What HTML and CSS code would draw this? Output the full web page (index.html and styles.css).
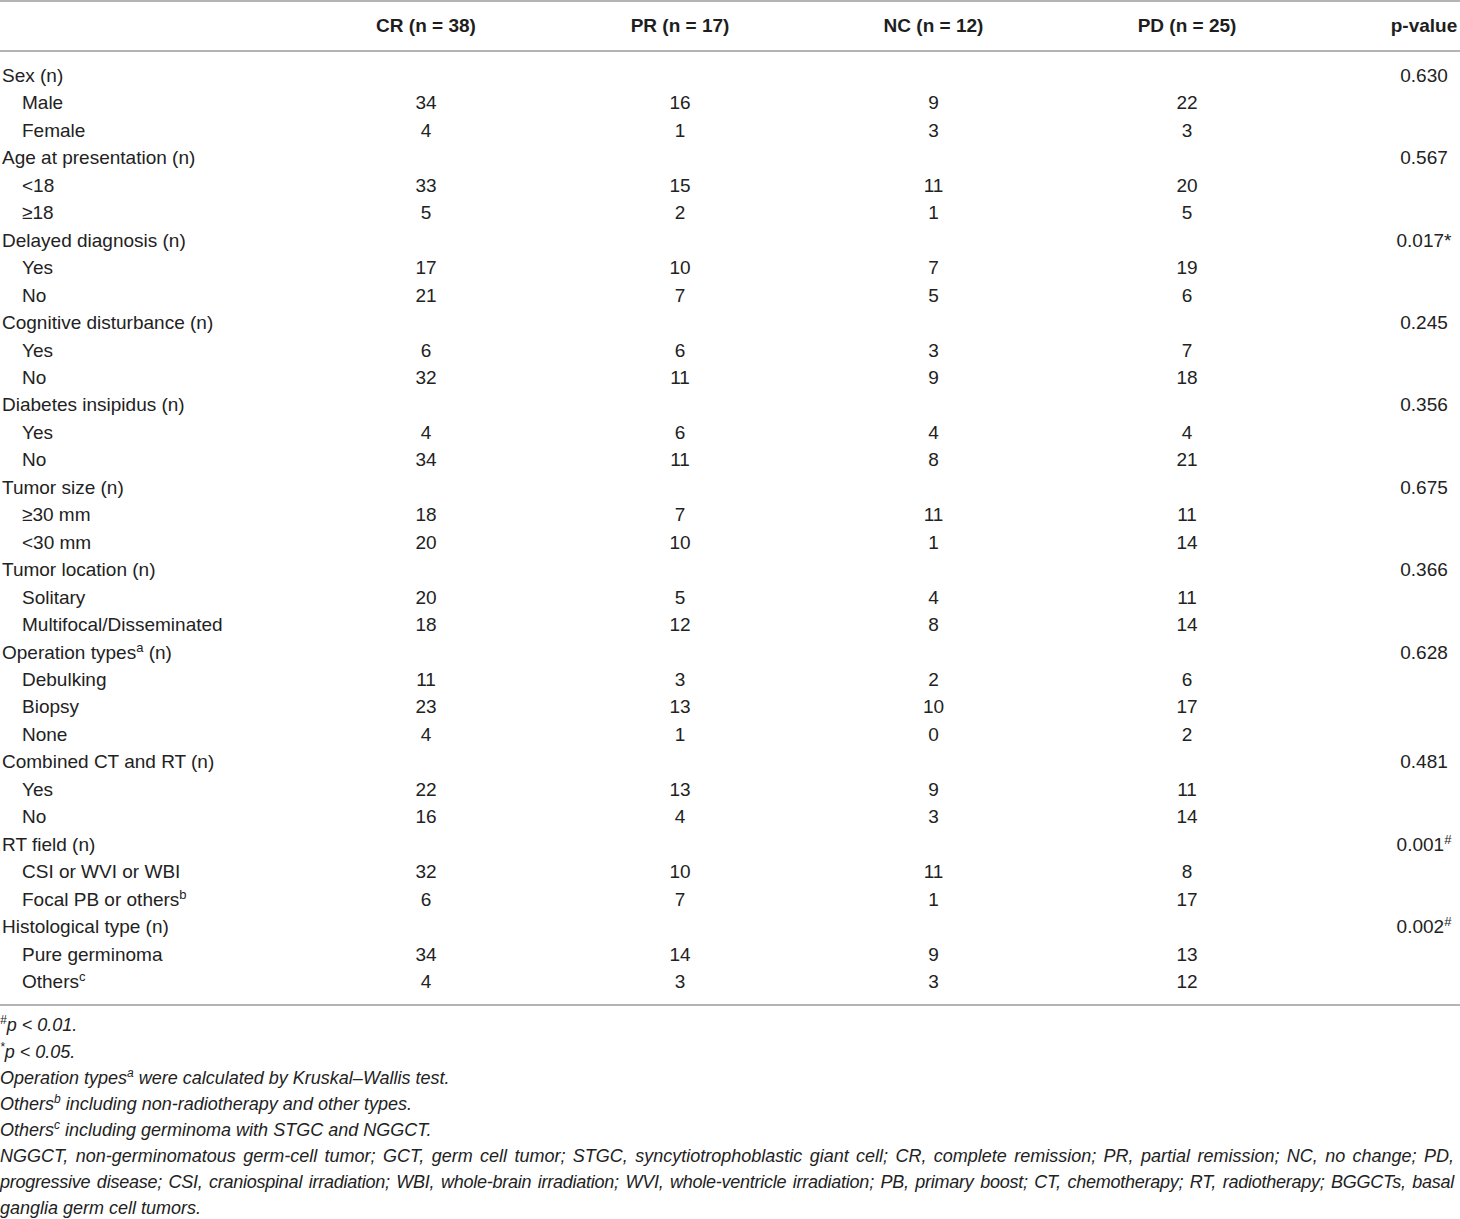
FILE: index.html
```html
<!DOCTYPE html>
<html lang="en">
<head>
<meta charset="utf-8">
<title>Table</title>
<link rel="stylesheet" href="styles.css">
</head>
<body>
<table class="data">
  <colgroup>
    <col class="c-label"><col class="c-num"><col class="c-num"><col class="c-num3"><col class="c-num"><col class="c-p">
  </colgroup>
  <thead>
    <tr>
      <th class="label"></th>
      <th>CR (n = 38)</th>
      <th>PR (n = 17)</th>
      <th>NC (n = 12)</th>
      <th>PD (n = 25)</th>
      <th class="pval">p-value</th>
    </tr>
  </thead>
  <tbody>
    <tr class="first"><td class="cat">Sex (n)</td><td></td><td></td><td></td><td></td><td class="pval">0.630</td></tr>
    <tr><td class="sub">Male</td><td>34</td><td>16</td><td>9</td><td>22</td><td class="pval"></td></tr>
    <tr><td class="sub">Female</td><td>4</td><td>1</td><td>3</td><td>3</td><td class="pval"></td></tr>
    <tr><td class="cat">Age at presentation (n)</td><td></td><td></td><td></td><td></td><td class="pval">0.567</td></tr>
    <tr><td class="sub">&lt;18</td><td>33</td><td>15</td><td>11</td><td>20</td><td class="pval"></td></tr>
    <tr><td class="sub">≥18</td><td>5</td><td>2</td><td>1</td><td>5</td><td class="pval"></td></tr>
    <tr><td class="cat">Delayed diagnosis (n)</td><td></td><td></td><td></td><td></td><td class="pval">0.017*</td></tr>
    <tr><td class="sub">Yes</td><td>17</td><td>10</td><td>7</td><td>19</td><td class="pval"></td></tr>
    <tr><td class="sub">No</td><td>21</td><td>7</td><td>5</td><td>6</td><td class="pval"></td></tr>
    <tr><td class="cat">Cognitive disturbance (n)</td><td></td><td></td><td></td><td></td><td class="pval">0.245</td></tr>
    <tr><td class="sub">Yes</td><td>6</td><td>6</td><td>3</td><td>7</td><td class="pval"></td></tr>
    <tr><td class="sub">No</td><td>32</td><td>11</td><td>9</td><td>18</td><td class="pval"></td></tr>
    <tr><td class="cat">Diabetes insipidus (n)</td><td></td><td></td><td></td><td></td><td class="pval">0.356</td></tr>
    <tr><td class="sub">Yes</td><td>4</td><td>6</td><td>4</td><td>4</td><td class="pval"></td></tr>
    <tr><td class="sub">No</td><td>34</td><td>11</td><td>8</td><td>21</td><td class="pval"></td></tr>
    <tr><td class="cat">Tumor size (n)</td><td></td><td></td><td></td><td></td><td class="pval">0.675</td></tr>
    <tr><td class="sub">≥30 mm</td><td>18</td><td>7</td><td>11</td><td>11</td><td class="pval"></td></tr>
    <tr><td class="sub">&lt;30 mm</td><td>20</td><td>10</td><td>1</td><td>14</td><td class="pval"></td></tr>
    <tr><td class="cat">Tumor location (n)</td><td></td><td></td><td></td><td></td><td class="pval">0.366</td></tr>
    <tr><td class="sub">Solitary</td><td>20</td><td>5</td><td>4</td><td>11</td><td class="pval"></td></tr>
    <tr><td class="sub">Multifocal/Disseminated</td><td>18</td><td>12</td><td>8</td><td>14</td><td class="pval"></td></tr>
    <tr><td class="cat">Operation types<sup>a</sup> (n)</td><td></td><td></td><td></td><td></td><td class="pval">0.628</td></tr>
    <tr><td class="sub">Debulking</td><td>11</td><td>3</td><td>2</td><td>6</td><td class="pval"></td></tr>
    <tr><td class="sub">Biopsy</td><td>23</td><td>13</td><td>10</td><td>17</td><td class="pval"></td></tr>
    <tr><td class="sub">None</td><td>4</td><td>1</td><td>0</td><td>2</td><td class="pval"></td></tr>
    <tr><td class="cat">Combined CT and RT (n)</td><td></td><td></td><td></td><td></td><td class="pval">0.481</td></tr>
    <tr><td class="sub">Yes</td><td>22</td><td>13</td><td>9</td><td>11</td><td class="pval"></td></tr>
    <tr><td class="sub">No</td><td>16</td><td>4</td><td>3</td><td>14</td><td class="pval"></td></tr>
    <tr><td class="cat">RT field (n)</td><td></td><td></td><td></td><td></td><td class="pval">0.001<sup>#</sup></td></tr>
    <tr><td class="sub">CSI or WVI or WBI</td><td>32</td><td>10</td><td>11</td><td>8</td><td class="pval"></td></tr>
    <tr><td class="sub">Focal PB or others<sup>b</sup></td><td>6</td><td>7</td><td>1</td><td>17</td><td class="pval"></td></tr>
    <tr><td class="cat">Histological type (n)</td><td></td><td></td><td></td><td></td><td class="pval">0.002<sup>#</sup></td></tr>
    <tr><td class="sub">Pure germinoma</td><td>34</td><td>14</td><td>9</td><td>13</td><td class="pval"></td></tr>
    <tr class="last"><td class="sub">Others<sup>c</sup></td><td>4</td><td>3</td><td>3</td><td>12</td><td class="pval"></td></tr>
  </tbody>
</table>
<div class="notes">
  <p><sup>#</sup>p &lt; 0.01.</p>
  <p><sup>*</sup>p &lt; 0.05.</p>
  <p>Operation types<sup>a</sup> were calculated by Kruskal–Wallis test.</p>
  <p>Others<sup>b</sup> including non-radiotherapy and other types.</p>
  <p>Others<sup>c</sup> including germinoma with STGC and NGGCT.</p>
  <p class="just">NGGCT, non-germinomatous germ-cell tumor; GCT, germ cell tumor; STGC, syncytiotrophoblastic giant cell; CR, complete remission; PR, partial remission; NC, no change; PD, <span class="tight">progressive disease; CSI, craniospinal irradiation; WBI, whole-brain irradiation; WVI, whole-ventricle irradiation; PB, primary boost; CT, chemotherapy; RT, radiotherapy; BGGCTs, basal</span> ganglia germ cell tumors.</p>
</div>
</body>
</html>
```

FILE: styles.css
```css
html, body {
  margin: 0;
  padding: 0;
  background: #ffffff;
}

body {
  width: 1460px;
  font-family: "Liberation Sans", Arial, Helvetica, sans-serif;
  color: #222222;
}

.data {
  width: 1460px;
  border-collapse: collapse;
  table-layout: fixed;
  font-size: 19px;
  border-top: 2px solid #b4b4b4;
  border-bottom: 2px solid #b4b4b4;
}

.c-label { width: 299px; }
.c-num { width: 254px; }
.c-num3 { width: 253px; }
.c-p { width: 146px; }

.data thead tr {
  border-bottom: 2px solid #b4b4b4;
}

.data th {
  height: 48px;
  padding: 0;
  font-weight: bold;
  text-align: center;
  vertical-align: middle;
  color: #1e1e1e;
}

.data td {
  padding: 0;
  line-height: 27.45px;
  text-align: center;
  vertical-align: middle;
  white-space: nowrap;
}

.data th.pval,
.data td.pval {
  padding-left: 74px;
  text-align: center;
}

.data td.cat {
  text-align: left;
  padding-left: 2px;
}

.data td.sub {
  text-align: left;
  padding-left: 22px;
}

.data tr.first td {
  padding-top: 10px;
}

.data tr.last td {
  padding-bottom: 9px;
}

.data sup {
  font-size: 13px;
  line-height: 0;
  vertical-align: 7px;
}

.notes {
  margin-top: 6px;
  font-family: "Liberation Sans", Arial, sans-serif;
  font-style: italic;
  font-size: 18px;
  line-height: 26.1px;
  color: #222222;
}

.notes p {
  margin: 0;
}

.notes p.just {
  text-align: justify;
  padding-right: 6px;
}

.notes .tight {
  letter-spacing: -0.25px;
  word-spacing: -1px;
}

.notes sup {
  font-size: 12px;
  line-height: 0;
  vertical-align: 7px;
}
```
